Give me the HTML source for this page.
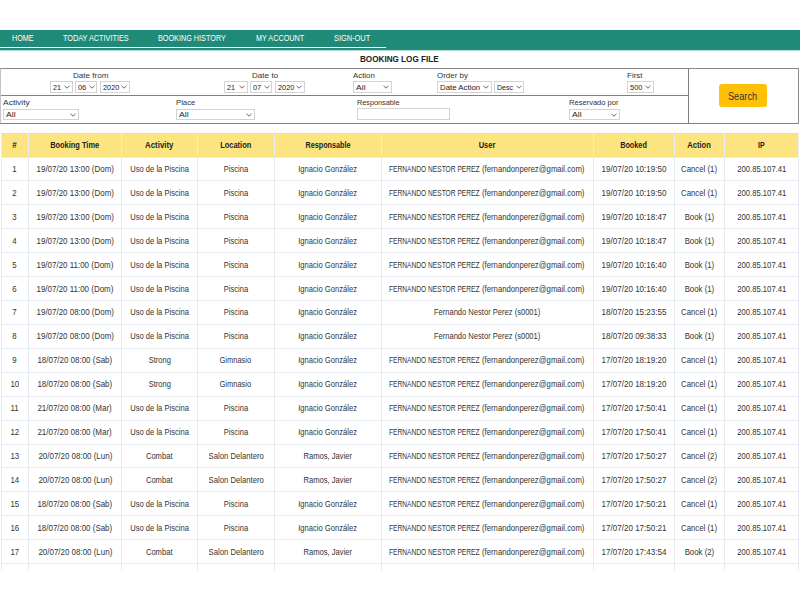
<!DOCTYPE html>
<html><head><meta charset="utf-8">
<style>
html,body{margin:0;padding:0;background:#fff;width:800px;height:600px;overflow:hidden;position:relative;}
body{font-family:"Liberation Sans",sans-serif;color:#333;}
#nav{position:absolute;left:0;top:30px;width:800px;height:20px;background:#1f8a78;box-shadow:0 0.7px 0.6px rgba(31,138,120,0.3);}
#navline{position:absolute;left:0;top:47px;width:386px;height:1.3px;background:#fff;}
.nv{position:absolute;color:#fff;font-size:8.3px;line-height:1;white-space:nowrap;transform-origin:0 0;}
#title{position:absolute;top:53.81px;left:360.2px;font-weight:bold;font-size:9.4px;line-height:1;color:#222;white-space:nowrap;transform-origin:0 0;transform:scaleX(0.867)}
#filt{position:absolute;left:0;top:68px;width:799px;height:55.5px;border:1px solid #8a8a8a;border-left:1.5px solid #c4c4c4;border-bottom-color:#808080;box-sizing:border-box;}
.hl{position:absolute;background:#808080;}
.lab{position:absolute;font-size:8.0px;line-height:1;color:#333;white-space:nowrap;transform-origin:0 0;}
.sel{position:absolute;height:11.8px;box-sizing:border-box;border:1px solid #d3d3d3;background:#fff;font-size:7.8px;line-height:9.3px;color:#222;white-space:nowrap;}
.st{position:absolute;left:2px;top:1.2px;transform-origin:0 0;}
.chev{position:absolute;right:1.9px;top:3.3px;}
#btn{position:absolute;left:719px;top:84.3px;width:48.2px;height:23.2px;background:#ffc107;border-radius:3px;}
#btn span{position:absolute;left:9.40px;top:7.52px;font-size:10px;line-height:1;color:#333;transform-origin:0 0;transform:scaleX(0.918)}
#clip{position:absolute;left:0;top:0;width:800px;height:571px;overflow:hidden;}
#tbl{position:absolute;left:0.5px;top:132.5px;border-collapse:collapse;table-layout:fixed;}
#tbl td,#tbl th{border:1px solid #e8ebf0;padding:0;text-align:center;white-space:nowrap;overflow:visible;color:#333;}
#tbl span{display:inline-block;margin:0 -60px;}
#tbl th span{position:relative;left:-0.6px;}
#tbl td > span{position:relative;left:-0.5px;}
#tbl span.uw{position:relative;margin:0;text-align:left;}
#tbl span.ua{position:absolute;top:0;margin:0;transform-origin:0 0;}
#tbl th{border-top-color:#f6de7e;background:#fce481;height:23px;font-weight:bold;color:#222;font-size:9.0px;}
#tbl td{height:22.93px;font-size:8.7px;}
</style></head><body>
<div id="nav"></div>
<div id="navline"></div>
<div class="nv" style="left:11.60px;top:33.93px;transform:scaleX(0.867)">HOME</div><div class="nv" style="left:62.70px;top:33.93px;transform:scaleX(0.880)">TODAY ACTIVITIES</div><div class="nv" style="left:158.35px;top:33.93px;transform:scaleX(0.874)">BOOKING HISTORY</div><div class="nv" style="left:255.80px;top:33.93px;transform:scaleX(0.875)">MY ACCOUNT</div><div class="nv" style="left:334.35px;top:33.93px;transform:scaleX(0.893)">SIGN-OUT</div>
<div id="title">BOOKING LOG FILE</div>
<div id="filt"></div>
<div class="hl" style="left:1px;top:95px;width:688px;height:1px"></div>
<div class="hl" style="left:688px;top:68px;width:1px;height:55px"></div>
<div class="lab" style="left:72.70px;top:72.08px;transform:scaleX(1.012)">Date from</div>
<div class="sel" style="left:50.10px;top:81.1px;width:22.60px"><span class="st" style="top:1.20px;transform:scaleX(0.922)">21</span><svg class="chev" width="6" height="4" viewBox="0 0 6 4"><polyline points="0.5,0.8 3,3.2 5.5,0.8" fill="none" stroke="#555" stroke-width="0.9"/></svg></div><div class="sel" style="left:74.80px;top:81.1px;width:22.70px"><span class="st" style="top:1.20px;transform:scaleX(0.951)">06</span><svg class="chev" width="6" height="4" viewBox="0 0 6 4"><polyline points="0.5,0.8 3,3.2 5.5,0.8" fill="none" stroke="#555" stroke-width="0.9"/></svg></div><div class="sel" style="left:99.80px;top:81.1px;width:30.40px"><span class="st" style="top:1.20px;transform:scaleX(0.948)">2020</span><svg class="chev" width="6" height="4" viewBox="0 0 6 4"><polyline points="0.5,0.8 3,3.2 5.5,0.8" fill="none" stroke="#555" stroke-width="0.9"/></svg></div>
<div class="lab" style="left:252.10px;top:72.08px;transform:scaleX(1.014)">Date to</div>
<div class="sel" style="left:224.30px;top:81.1px;width:23.40px"><span class="st" style="top:1.20px;transform:scaleX(0.922)">21</span><svg class="chev" width="6" height="4" viewBox="0 0 6 4"><polyline points="0.5,0.8 3,3.2 5.5,0.8" fill="none" stroke="#555" stroke-width="0.9"/></svg></div><div class="sel" style="left:249.60px;top:81.1px;width:22.90px"><span class="st" style="top:1.20px;transform:scaleX(0.951)">07</span><svg class="chev" width="6" height="4" viewBox="0 0 6 4"><polyline points="0.5,0.8 3,3.2 5.5,0.8" fill="none" stroke="#555" stroke-width="0.9"/></svg></div><div class="sel" style="left:274.60px;top:81.1px;width:30.60px"><span class="st" style="top:1.20px;transform:scaleX(0.948)">2020</span><svg class="chev" width="6" height="4" viewBox="0 0 6 4"><polyline points="0.5,0.8 3,3.2 5.5,0.8" fill="none" stroke="#555" stroke-width="0.9"/></svg></div>
<div class="lab" style="left:353.35px;top:72.08px;transform:scaleX(0.981)">Action</div>
<div class="sel" style="left:353.10px;top:81.1px;width:38.80px"><span class="st" style="top:1.20px;transform:scaleX(1.113)">All</span><svg class="chev" width="6" height="4" viewBox="0 0 6 4"><polyline points="0.5,0.8 3,3.2 5.5,0.8" fill="none" stroke="#555" stroke-width="0.9"/></svg></div>
<div class="lab" style="left:436.50px;top:72.08px;transform:scaleX(0.993)">Order by</div>
<div class="sel" style="left:436.80px;top:81.1px;width:55.10px"><span class="st" style="top:1.20px;transform:scaleX(1.006)">Date Action</span><svg class="chev" width="6" height="4" viewBox="0 0 6 4"><polyline points="0.5,0.8 3,3.2 5.5,0.8" fill="none" stroke="#555" stroke-width="0.9"/></svg></div><div class="sel" style="left:494.00px;top:81.1px;width:30.40px"><span class="st" style="top:1.20px;transform:scaleX(0.909)">Desc</span><svg class="chev" width="6" height="4" viewBox="0 0 6 4"><polyline points="0.5,0.8 3,3.2 5.5,0.8" fill="none" stroke="#555" stroke-width="0.9"/></svg></div>
<div class="lab" style="left:627.10px;top:72.08px;transform:scaleX(1.001)">First</div>
<div class="sel" style="left:626.80px;top:81.1px;width:26.90px"><span class="st" style="top:1.20px;transform:scaleX(0.957)">500</span><svg class="chev" width="6" height="4" viewBox="0 0 6 4"><polyline points="0.5,0.8 3,3.2 5.5,0.8" fill="none" stroke="#555" stroke-width="0.9"/></svg></div>
<div class="lab" style="left:3.35px;top:98.93px;transform:scaleX(1.058)">Activity</div>
<div class="sel" style="left:3.10px;top:108.6px;width:75.60px"><span class="st" style="top:0.40px;transform:scaleX(1.113)">All</span><svg class="chev" width="6" height="4" viewBox="0 0 6 4"><polyline points="0.5,0.8 3,3.2 5.5,0.8" fill="none" stroke="#555" stroke-width="0.9"/></svg></div>
<div class="lab" style="left:175.85px;top:98.93px;transform:scaleX(0.965)">Place</div>
<div class="sel" style="left:175.60px;top:108.6px;width:79.00px"><span class="st" style="top:0.40px;transform:scaleX(1.113)">All</span><svg class="chev" width="6" height="4" viewBox="0 0 6 4"><polyline points="0.5,0.8 3,3.2 5.5,0.8" fill="none" stroke="#555" stroke-width="0.9"/></svg></div>
<div class="lab" style="left:356.50px;top:98.93px;transform:scaleX(0.909)">Responsable</div>
<div class="sel" style="left:356.9px;top:108.2px;width:92.8px;height:12.2px"></div>
<div class="lab" style="left:569.35px;top:98.93px;transform:scaleX(0.944)">Reservado por</div>
<div class="sel" style="left:569.00px;top:108.6px;width:50.70px"><span class="st" style="top:0.40px;transform:scaleX(1.113)">All</span><svg class="chev" width="6" height="4" viewBox="0 0 6 4"><polyline points="0.5,0.8 3,3.2 5.5,0.8" fill="none" stroke="#555" stroke-width="0.9"/></svg></div>
<div id="btn"><span>Search</span></div>
<div id="clip">
<table id="tbl">
<colgroup><col style="width:27.8px"><col style="width:93.1px"><col style="width:76.1px"><col style="width:76.7px"><col style="width:107.3px"><col style="width:211.7px"><col style="width:80.9px"><col style="width:50.3px"><col style="width:74px"></colgroup>
<tr><th><span style="transform:scaleX(0.900)">#</span></th><th><span style="transform:scaleX(0.826)">Booking Time</span></th><th><span style="transform:scaleX(0.873)">Activity</span></th><th><span style="transform:scaleX(0.830)">Location</span></th><th><span style="transform:scaleX(0.806)">Responsable</span></th><th><span style="transform:scaleX(0.831)">User</span></th><th><span style="transform:scaleX(0.810)">Booked</span></th><th><span style="transform:scaleX(0.848)">Action</span></th><th><span style="transform:scaleX(0.780)">IP</span></th></tr>
<tr><td><span style="transform:scaleX(0.900)">1</span></td><td><span style="transform:scaleX(0.916)">19/07/20 13:00 (Dom)</span></td><td><span style="transform:scaleX(0.873)">Uso de la Piscina</span></td><td><span style="transform:scaleX(0.872)">Piscina</span></td><td><span style="transform:scaleX(0.875)">Ignacio González</span></td><td><span class="uw" style="width:196.1px"><span class="ua" style="left:0;transform:scaleX(0.763)">FERNANDO NESTOR PEREZ</span><span class="ua" style="left:93.20px;transform:scaleX(0.890)">(fernandonperez@gmail.com)</span>&nbsp;</span></td><td><span style="transform:scaleX(0.927)">19/07/20 10:19:50</span></td><td><span style="transform:scaleX(0.899)">Cancel (1)</span></td><td><span style="transform:scaleX(0.884)">200.85.107.41</span></td></tr>
<tr><td><span style="transform:scaleX(0.900)">2</span></td><td><span style="transform:scaleX(0.916)">19/07/20 13:00 (Dom)</span></td><td><span style="transform:scaleX(0.873)">Uso de la Piscina</span></td><td><span style="transform:scaleX(0.872)">Piscina</span></td><td><span style="transform:scaleX(0.875)">Ignacio González</span></td><td><span class="uw" style="width:196.1px"><span class="ua" style="left:0;transform:scaleX(0.763)">FERNANDO NESTOR PEREZ</span><span class="ua" style="left:93.20px;transform:scaleX(0.890)">(fernandonperez@gmail.com)</span>&nbsp;</span></td><td><span style="transform:scaleX(0.927)">19/07/20 10:19:50</span></td><td><span style="transform:scaleX(0.899)">Cancel (1)</span></td><td><span style="transform:scaleX(0.884)">200.85.107.41</span></td></tr>
<tr><td><span style="transform:scaleX(0.900)">3</span></td><td><span style="transform:scaleX(0.916)">19/07/20 13:00 (Dom)</span></td><td><span style="transform:scaleX(0.873)">Uso de la Piscina</span></td><td><span style="transform:scaleX(0.872)">Piscina</span></td><td><span style="transform:scaleX(0.875)">Ignacio González</span></td><td><span class="uw" style="width:196.1px"><span class="ua" style="left:0;transform:scaleX(0.763)">FERNANDO NESTOR PEREZ</span><span class="ua" style="left:93.20px;transform:scaleX(0.890)">(fernandonperez@gmail.com)</span>&nbsp;</span></td><td><span style="transform:scaleX(0.927)">19/07/20 10:18:47</span></td><td><span style="transform:scaleX(0.899)">Book (1)</span></td><td><span style="transform:scaleX(0.884)">200.85.107.41</span></td></tr>
<tr><td><span style="transform:scaleX(0.900)">4</span></td><td><span style="transform:scaleX(0.916)">19/07/20 13:00 (Dom)</span></td><td><span style="transform:scaleX(0.873)">Uso de la Piscina</span></td><td><span style="transform:scaleX(0.872)">Piscina</span></td><td><span style="transform:scaleX(0.875)">Ignacio González</span></td><td><span class="uw" style="width:196.1px"><span class="ua" style="left:0;transform:scaleX(0.763)">FERNANDO NESTOR PEREZ</span><span class="ua" style="left:93.20px;transform:scaleX(0.890)">(fernandonperez@gmail.com)</span>&nbsp;</span></td><td><span style="transform:scaleX(0.927)">19/07/20 10:18:47</span></td><td><span style="transform:scaleX(0.899)">Book (1)</span></td><td><span style="transform:scaleX(0.884)">200.85.107.41</span></td></tr>
<tr><td><span style="transform:scaleX(0.900)">5</span></td><td><span style="transform:scaleX(0.916)">19/07/20 11:00 (Dom)</span></td><td><span style="transform:scaleX(0.873)">Uso de la Piscina</span></td><td><span style="transform:scaleX(0.872)">Piscina</span></td><td><span style="transform:scaleX(0.875)">Ignacio González</span></td><td><span class="uw" style="width:196.1px"><span class="ua" style="left:0;transform:scaleX(0.763)">FERNANDO NESTOR PEREZ</span><span class="ua" style="left:93.20px;transform:scaleX(0.890)">(fernandonperez@gmail.com)</span>&nbsp;</span></td><td><span style="transform:scaleX(0.927)">19/07/20 10:16:40</span></td><td><span style="transform:scaleX(0.899)">Book (1)</span></td><td><span style="transform:scaleX(0.884)">200.85.107.41</span></td></tr>
<tr><td><span style="transform:scaleX(0.900)">6</span></td><td><span style="transform:scaleX(0.916)">19/07/20 11:00 (Dom)</span></td><td><span style="transform:scaleX(0.873)">Uso de la Piscina</span></td><td><span style="transform:scaleX(0.872)">Piscina</span></td><td><span style="transform:scaleX(0.875)">Ignacio González</span></td><td><span class="uw" style="width:196.1px"><span class="ua" style="left:0;transform:scaleX(0.763)">FERNANDO NESTOR PEREZ</span><span class="ua" style="left:93.20px;transform:scaleX(0.890)">(fernandonperez@gmail.com)</span>&nbsp;</span></td><td><span style="transform:scaleX(0.927)">19/07/20 10:16:40</span></td><td><span style="transform:scaleX(0.899)">Book (1)</span></td><td><span style="transform:scaleX(0.884)">200.85.107.41</span></td></tr>
<tr><td><span style="transform:scaleX(0.900)">7</span></td><td><span style="transform:scaleX(0.916)">19/07/20 08:00 (Dom)</span></td><td><span style="transform:scaleX(0.873)">Uso de la Piscina</span></td><td><span style="transform:scaleX(0.872)">Piscina</span></td><td><span style="transform:scaleX(0.875)">Ignacio González</span></td><td><span style="transform:scaleX(0.871)">Fernando Nestor Perez (s0001)</span></td><td><span style="transform:scaleX(0.927)">18/07/20 15:23:55</span></td><td><span style="transform:scaleX(0.899)">Cancel (1)</span></td><td><span style="transform:scaleX(0.884)">200.85.107.41</span></td></tr>
<tr><td><span style="transform:scaleX(0.900)">8</span></td><td><span style="transform:scaleX(0.916)">19/07/20 08:00 (Dom)</span></td><td><span style="transform:scaleX(0.873)">Uso de la Piscina</span></td><td><span style="transform:scaleX(0.872)">Piscina</span></td><td><span style="transform:scaleX(0.875)">Ignacio González</span></td><td><span style="transform:scaleX(0.871)">Fernando Nestor Perez (s0001)</span></td><td><span style="transform:scaleX(0.927)">18/07/20 09:38:33</span></td><td><span style="transform:scaleX(0.899)">Book (1)</span></td><td><span style="transform:scaleX(0.884)">200.85.107.41</span></td></tr>
<tr><td><span style="transform:scaleX(0.900)">9</span></td><td><span style="transform:scaleX(0.916)">18/07/20 08:00 (Sab)</span></td><td><span style="transform:scaleX(0.865)">Strong</span></td><td><span style="transform:scaleX(0.865)">Gimnasio</span></td><td><span style="transform:scaleX(0.875)">Ignacio González</span></td><td><span class="uw" style="width:196.1px"><span class="ua" style="left:0;transform:scaleX(0.763)">FERNANDO NESTOR PEREZ</span><span class="ua" style="left:93.20px;transform:scaleX(0.890)">(fernandonperez@gmail.com)</span>&nbsp;</span></td><td><span style="transform:scaleX(0.927)">17/07/20 18:19:20</span></td><td><span style="transform:scaleX(0.899)">Cancel (1)</span></td><td><span style="transform:scaleX(0.884)">200.85.107.41</span></td></tr>
<tr><td><span style="transform:scaleX(0.900)">10</span></td><td><span style="transform:scaleX(0.916)">18/07/20 08:00 (Sab)</span></td><td><span style="transform:scaleX(0.865)">Strong</span></td><td><span style="transform:scaleX(0.865)">Gimnasio</span></td><td><span style="transform:scaleX(0.875)">Ignacio González</span></td><td><span class="uw" style="width:196.1px"><span class="ua" style="left:0;transform:scaleX(0.763)">FERNANDO NESTOR PEREZ</span><span class="ua" style="left:93.20px;transform:scaleX(0.890)">(fernandonperez@gmail.com)</span>&nbsp;</span></td><td><span style="transform:scaleX(0.927)">17/07/20 18:19:20</span></td><td><span style="transform:scaleX(0.899)">Cancel (1)</span></td><td><span style="transform:scaleX(0.884)">200.85.107.41</span></td></tr>
<tr><td><span style="transform:scaleX(0.900)">11</span></td><td><span style="transform:scaleX(0.916)">21/07/20 08:00 (Mar)</span></td><td><span style="transform:scaleX(0.873)">Uso de la Piscina</span></td><td><span style="transform:scaleX(0.872)">Piscina</span></td><td><span style="transform:scaleX(0.875)">Ignacio González</span></td><td><span class="uw" style="width:196.1px"><span class="ua" style="left:0;transform:scaleX(0.763)">FERNANDO NESTOR PEREZ</span><span class="ua" style="left:93.20px;transform:scaleX(0.890)">(fernandonperez@gmail.com)</span>&nbsp;</span></td><td><span style="transform:scaleX(0.927)">17/07/20 17:50:41</span></td><td><span style="transform:scaleX(0.899)">Cancel (1)</span></td><td><span style="transform:scaleX(0.884)">200.85.107.41</span></td></tr>
<tr><td><span style="transform:scaleX(0.900)">12</span></td><td><span style="transform:scaleX(0.916)">21/07/20 08:00 (Mar)</span></td><td><span style="transform:scaleX(0.873)">Uso de la Piscina</span></td><td><span style="transform:scaleX(0.872)">Piscina</span></td><td><span style="transform:scaleX(0.875)">Ignacio González</span></td><td><span class="uw" style="width:196.1px"><span class="ua" style="left:0;transform:scaleX(0.763)">FERNANDO NESTOR PEREZ</span><span class="ua" style="left:93.20px;transform:scaleX(0.890)">(fernandonperez@gmail.com)</span>&nbsp;</span></td><td><span style="transform:scaleX(0.927)">17/07/20 17:50:41</span></td><td><span style="transform:scaleX(0.899)">Cancel (1)</span></td><td><span style="transform:scaleX(0.884)">200.85.107.41</span></td></tr>
<tr><td><span style="transform:scaleX(0.900)">13</span></td><td><span style="transform:scaleX(0.916)">20/07/20 08:00 (Lun)</span></td><td><span style="transform:scaleX(0.875)">Combat</span></td><td><span style="transform:scaleX(0.886)">Salon Delantero</span></td><td><span style="transform:scaleX(0.877)">Ramos, Javier</span></td><td><span class="uw" style="width:196.1px"><span class="ua" style="left:0;transform:scaleX(0.763)">FERNANDO NESTOR PEREZ</span><span class="ua" style="left:93.20px;transform:scaleX(0.890)">(fernandonperez@gmail.com)</span>&nbsp;</span></td><td><span style="transform:scaleX(0.927)">17/07/20 17:50:27</span></td><td><span style="transform:scaleX(0.899)">Cancel (2)</span></td><td><span style="transform:scaleX(0.884)">200.85.107.41</span></td></tr>
<tr><td><span style="transform:scaleX(0.900)">14</span></td><td><span style="transform:scaleX(0.916)">20/07/20 08:00 (Lun)</span></td><td><span style="transform:scaleX(0.875)">Combat</span></td><td><span style="transform:scaleX(0.886)">Salon Delantero</span></td><td><span style="transform:scaleX(0.877)">Ramos, Javier</span></td><td><span class="uw" style="width:196.1px"><span class="ua" style="left:0;transform:scaleX(0.763)">FERNANDO NESTOR PEREZ</span><span class="ua" style="left:93.20px;transform:scaleX(0.890)">(fernandonperez@gmail.com)</span>&nbsp;</span></td><td><span style="transform:scaleX(0.927)">17/07/20 17:50:27</span></td><td><span style="transform:scaleX(0.899)">Cancel (2)</span></td><td><span style="transform:scaleX(0.884)">200.85.107.41</span></td></tr>
<tr><td><span style="transform:scaleX(0.900)">15</span></td><td><span style="transform:scaleX(0.916)">18/07/20 08:00 (Sab)</span></td><td><span style="transform:scaleX(0.873)">Uso de la Piscina</span></td><td><span style="transform:scaleX(0.872)">Piscina</span></td><td><span style="transform:scaleX(0.875)">Ignacio González</span></td><td><span class="uw" style="width:196.1px"><span class="ua" style="left:0;transform:scaleX(0.763)">FERNANDO NESTOR PEREZ</span><span class="ua" style="left:93.20px;transform:scaleX(0.890)">(fernandonperez@gmail.com)</span>&nbsp;</span></td><td><span style="transform:scaleX(0.927)">17/07/20 17:50:21</span></td><td><span style="transform:scaleX(0.899)">Cancel (1)</span></td><td><span style="transform:scaleX(0.884)">200.85.107.41</span></td></tr>
<tr><td><span style="transform:scaleX(0.900)">16</span></td><td><span style="transform:scaleX(0.916)">18/07/20 08:00 (Sab)</span></td><td><span style="transform:scaleX(0.873)">Uso de la Piscina</span></td><td><span style="transform:scaleX(0.872)">Piscina</span></td><td><span style="transform:scaleX(0.875)">Ignacio González</span></td><td><span class="uw" style="width:196.1px"><span class="ua" style="left:0;transform:scaleX(0.763)">FERNANDO NESTOR PEREZ</span><span class="ua" style="left:93.20px;transform:scaleX(0.890)">(fernandonperez@gmail.com)</span>&nbsp;</span></td><td><span style="transform:scaleX(0.927)">17/07/20 17:50:21</span></td><td><span style="transform:scaleX(0.899)">Cancel (1)</span></td><td><span style="transform:scaleX(0.884)">200.85.107.41</span></td></tr>
<tr><td><span style="transform:scaleX(0.900)">17</span></td><td><span style="transform:scaleX(0.916)">20/07/20 08:00 (Lun)</span></td><td><span style="transform:scaleX(0.875)">Combat</span></td><td><span style="transform:scaleX(0.886)">Salon Delantero</span></td><td><span style="transform:scaleX(0.877)">Ramos, Javier</span></td><td><span class="uw" style="width:196.1px"><span class="ua" style="left:0;transform:scaleX(0.763)">FERNANDO NESTOR PEREZ</span><span class="ua" style="left:93.20px;transform:scaleX(0.890)">(fernandonperez@gmail.com)</span>&nbsp;</span></td><td><span style="transform:scaleX(0.927)">17/07/20 17:43:54</span></td><td><span style="transform:scaleX(0.899)">Book (2)</span></td><td><span style="transform:scaleX(0.884)">200.85.107.41</span></td></tr>
<tr><td></td><td></td><td></td><td></td><td></td><td></td><td></td><td></td><td></td></tr>
</table>
</div>
</body></html>
